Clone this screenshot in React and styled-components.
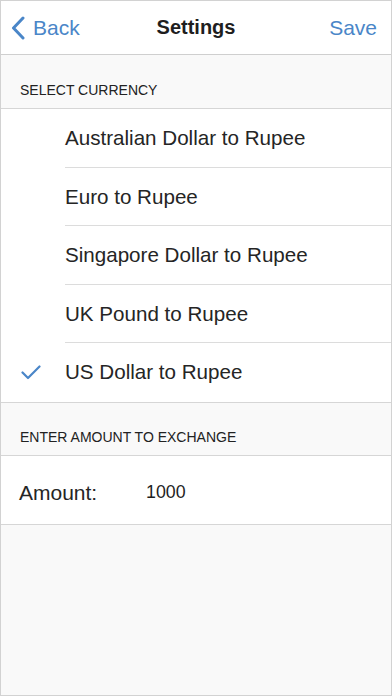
import React from "react";
import styled, { createGlobalStyle } from "styled-components";

const GlobalStyle = createGlobalStyle`
  html, body {
    margin: 0;
    padding: 0;
    background: #f9f9f9;
  }
  * {
    box-sizing: border-box;
  }
`;

const Screen = styled.div`
  width: 392px;
  height: 696px;
  border: 1px solid #d2d2d2;
  background: #f9f9f9;
  font-family: "Liberation Sans", Arial, sans-serif;
  color: #222;
  display: flex;
  flex-direction: column;
`;

const NavBar = styled.div`
  height: 54px;
  background: #fff;
  border-bottom: 1px solid #cfcfcf;
  display: flex;
  align-items: center;
  justify-content: space-between;
  padding: 0 14px 0 10px;
  position: relative;
`;

const NavButton = styled.a`
  display: flex;
  align-items: center;
  gap: 8px;
  color: #4a86c8;
  font-size: 21px;
  text-decoration: none;
`;

const Title = styled.div`
  position: absolute;
  left: 0;
  right: 0;
  text-align: center;
  font-size: 20px;
  font-weight: bold;
  color: #1e1e1e;
  pointer-events: none;
`;

const SectionHeader = styled.div`
  height: ${(p) => p.$height}px;
  display: flex;
  align-items: flex-end;
  padding: 0 0 10px 19px;
  font-size: 14px;
  color: #222;
  border-bottom: 1px solid #d6d6d6;
`;

const List = styled.div`
  background: #fff;
  border-bottom: 1px solid #d6d6d6;
`;

const Row = styled.div`
  height: 58.5px;
  display: flex;
  align-items: center;
  position: relative;
  &:not(:last-child)::after {
    content: "";
    position: absolute;
    left: 64px;
    right: 0;
    bottom: 0;
    height: 1px;
    background: #dcdcdc;
  }
`;

const CheckCell = styled.div`
  width: 64px;
  display: flex;
  justify-content: center;
  padding-right: 4px;
`;

const RowText = styled.div`
  font-size: 20.6px;
  color: #252525;
`;

const AmountRow = styled.div`
  height: 69px;
  background: #fff;
  border-bottom: 1px solid #d6d6d6;
  display: flex;
  align-items: center;
  padding: 6px 0 0 18px;
`;

const AmountLabel = styled.div`
  width: 127px;
  font-size: 21px;
  color: #252525;
`;

const AmountValue = styled.div`
  font-size: 17.8px;
  color: #1e1e1e;
`;

const Chevron = () => (
  <svg width="14" height="24" viewBox="0 0 14 24">
    <path d="M12 2 L2.5 12 L12 22" fill="none" stroke="#4a86c8" strokeWidth="3" strokeLinecap="round" strokeLinejoin="round" />
  </svg>
);

const Check = () => (
  <svg width="20" height="15" viewBox="0 0 20 15">
    <path d="M1.5 7.5 L7 13 L18.5 1.5" fill="none" stroke="#4a86c8" strokeWidth="2.2" strokeLinecap="round" strokeLinejoin="round" />
  </svg>
);

const currencies = [
  "Australian Dollar to Rupee",
  "Euro to Rupee",
  "Singapore Dollar to Rupee",
  "UK Pound to Rupee",
  "US Dollar to Rupee",
];

export default function App() {
  const selected = "US Dollar to Rupee";
  return (
    <>
      <GlobalStyle />
      <Screen>
        <NavBar>
          <NavButton>
            <Chevron />
            Back
          </NavButton>
          <Title>Settings</Title>
          <NavButton>Save</NavButton>
        </NavBar>
        <SectionHeader $height={54}>SELECT CURRENCY</SectionHeader>
        <List>
          {currencies.map((c) => (
            <Row key={c}>
              <CheckCell>{c === selected && <Check />}</CheckCell>
              <RowText>{c}</RowText>
            </Row>
          ))}
        </List>
        <SectionHeader $height={53}>ENTER AMOUNT TO EXCHANGE</SectionHeader>
        <AmountRow>
          <AmountLabel>Amount:</AmountLabel>
          <AmountValue>1000</AmountValue>
        </AmountRow>
      </Screen>
    </>
  );
}
